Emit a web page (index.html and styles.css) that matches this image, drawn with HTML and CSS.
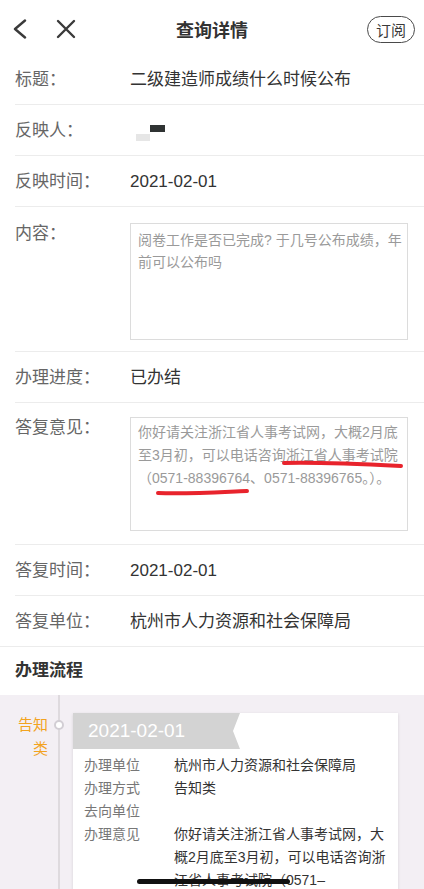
FILE: index.html
```html
<!DOCTYPE html>
<html>
  <head>
    <meta charset="UTF-8" />
    <title>查询详情</title>
    <link rel="stylesheet" href="styles.css">
  </head>
  <body>
    <div class="nav">
      <div class="nav-left">
        <svg class="nav-back" viewBox="0 0 16 20" fill="none" xmlns="http://www.w3.org/2000/svg">
          <path d="M13 1.5L3 10L13 18.5" stroke="currentColor" stroke-width="2.4" stroke-linecap="round" stroke-linejoin="round" />
        </svg>
        <svg class="nav-close" viewBox="0 0 20 20" fill="none" xmlns="http://www.w3.org/2000/svg">
          <path d="M2 2L18 18M18 2L2 18" stroke="currentColor" stroke-width="2.4" stroke-linecap="round" />
        </svg>
      </div>
      <div class="nav-title">查询详情</div>
      <div class="nav-right">
        <span class="subscribe">订阅</span>
      </div>
    </div>

    <div class="detail">
      <div class="field">
        <div class="field-label">标题：</div>
        <div class="field-value">二级建造师成绩什么时候公布</div>
      </div>
      <div class="field">
        <div class="field-label">反映人：</div>
        <div class="field-value name-mask">
          <span class="mask-light"></span><span class="mask-dark"></span>
        </div>
      </div>
      <div class="field">
        <div class="field-label">反映时间：</div>
        <div class="field-value">2021-02-01</div>
      </div>
      <div class="field field-box">
        <div class="field-label">内容：</div>
        <div class="textbox">阅卷工作是否已完成? 于几号公布成绩，年前可以公布吗</div>
      </div>
      <div class="field">
        <div class="field-label">办理进度：</div>
        <div class="field-value">已办结</div>
      </div>
      <div class="field field-box reply">
        <div class="field-label">答复意见：</div>
        <div class="textbox textbox-reply">
          你好请关注浙江省人事考试网，大概2月底至3月初，可以电话咨询浙江省人事考试院（0571-88396764、0571-88396765。）。
          <svg class="marks" viewBox="0 0 278 114" fill="none" xmlns="http://www.w3.org/2000/svg">
            <path d="M153 45C190 44 230 46 270 48" stroke="#e8232c" stroke-width="4" stroke-linecap="round" />
            <path d="M27 75C60 76 90 74 116 73" stroke="#e8232c" stroke-width="4" stroke-linecap="round" />
          </svg>
        </div>
      </div>
      <div class="field">
        <div class="field-label">答复时间：</div>
        <div class="field-value">2021-02-01</div>
      </div>
      <div class="field field-last">
        <div class="field-label">答复单位：</div>
        <div class="field-value">杭州市人力资源和社会保障局</div>
      </div>
    </div>

    <div class="flow-title">办理流程</div>

    <div class="timeline">
      <div class="tl-side">
        <div class="tl-type">告知类</div>
        <span class="tl-dot"></span>
      </div>
      <div class="tl-main">
        <div class="tl-card">
          <div class="tl-date">2021-02-01</div>
          <div class="tl-rows">
            <div class="tl-row">
              <div class="tl-label">办理单位</div>
              <div class="tl-value">杭州市人力资源和社会保障局</div>
            </div>
            <div class="tl-row">
              <div class="tl-label">办理方式</div>
              <div class="tl-value">告知类</div>
            </div>
            <div class="tl-row">
              <div class="tl-label">去向单位</div>
              <div class="tl-value"></div>
            </div>
            <div class="tl-row">
              <div class="tl-label">办理意见</div>
              <div class="tl-value">你好请关注浙江省人事考试网，大概2月底至3月初，可以电话咨询浙江省人事考试院（0571–88396764、0571–88396765。）。</div>
            </div>
          </div>
        </div>
      </div>
    </div>

    <div class="home-bar"></div>
  </body>
</html>
```

FILE: styles.css
```css
:root {
  --text-primary: #333333;
  --text-label: #666666;
  --text-muted: #9a9a9a;
  --border-color: #ececec;
  --box-border: #dcdcdc;
  --flow-bg: #f3eff4;
  --accent: #f2a31f;
}

* {
  margin: 0;
  padding: 0;
  box-sizing: border-box;
}

html,
body {
  height: 100%;
  overflow: hidden;
}

body {
  font-family: "Liberation Sans", "Noto Sans CJK SC", sans-serif;
  background-color: #ffffff;
  color: var(--text-primary);
  display: flex;
  flex-direction: column;
}

/* Top navigation */
.nav {
  height: 54px;
  padding-top: 4px;
  display: grid;
  grid-template-columns: 1fr auto 1fr;
  align-items: center;
  flex-shrink: 0;
}

.nav-left {
  display: flex;
  align-items: center;
  gap: 28px;
  padding-left: 12px;
  color: #3a3a3a;
}

.nav-back {
  width: 16px;
  height: 20px;
}

.nav-close {
  width: 20px;
  height: 20px;
}

.nav-title {
  font-size: 18px;
  font-weight: 700;
  color: var(--text-primary);
}

.nav-right {
  display: flex;
  justify-content: flex-end;
  padding-right: 9px;
}

.subscribe {
  display: inline-flex;
  align-items: center;
  height: 27px;
  padding: 0 8px;
  border: 1.5px solid #4a4a4a;
  border-radius: 14px;
  font-size: 15px;
  color: #3a3a3a;
}

/* Detail fields */
.detail {
  flex-shrink: 0;
}

.field {
  display: flex;
  margin-left: 15px;
  padding: 15px 0 13px;
  border-bottom: 1px solid var(--border-color);
  font-size: 17px;
  line-height: 22px;
}

.field-label {
  width: 115px;
  flex-shrink: 0;
  color: var(--text-label);
}

.field-value {
  color: var(--text-primary);
}

.field-box {
  padding: 16px 0 11px;
}

.field-box.reply {
  padding: 14px 0 13px;
}

.field-last {
  border-bottom: none;
}

.name-mask {
  display: flex;
  align-items: flex-start;
  padding: 2px 0 0 6px;
}

.mask-light {
  width: 14px;
  height: 7px;
  margin-top: 12px;
  background-color: #e6e6e6;
}

.mask-dark {
  width: 15px;
  height: 7px;
  margin-top: 3px;
  background-color: #2f3333;
}

.textbox {
  position: relative;
  width: 278px;
  height: 117px;
  padding: 5px 3px 5px 7px;
  border: 1px solid var(--box-border);
  font-size: 14px;
  line-height: 22px;
  color: var(--text-muted);
}

.textbox-reply {
  height: 114px;
  padding: 3px 7px;
  line-height: 23px;
}

.marks {
  position: absolute;
  left: 0;
  top: 0;
  width: 278px;
  height: 114px;
}

/* Flow */
.flow-title {
  flex-shrink: 0;
  padding: 13px 15px;
  border-top: 1px solid var(--border-color);
  font-size: 17px;
  font-weight: 700;
  line-height: 22px;
}

.timeline {
  flex: 1;
  display: flex;
  background-color: var(--flow-bg);
}

.tl-side {
  position: relative;
  width: 60px;
  flex-shrink: 0;
  padding: 18px 10px 0 18px;
  border-right: 2px solid #dedade;
}

.tl-type {
  font-size: 15px;
  line-height: 24px;
  text-align: right;
  color: var(--accent);
}

.tl-dot {
  position: absolute;
  right: -6px;
  top: 25px;
  width: 10px;
  height: 10px;
  border: 2px solid #d2ced4;
  border-radius: 50%;
  background-color: #ffffff;
}

.tl-main {
  flex: 1;
  padding: 18px 26px 0 13px;
}

.tl-card {
  height: 100%;
  background-color: #ffffff;
  box-shadow: 0 1px 3px rgba(0, 0, 0, 0.12);
}

.tl-date {
  width: 167px;
  height: 36px;
  padding-left: 15px;
  background-color: #d3d3d3;
  clip-path: polygon(0 0, 100% 0, calc(100% - 7px) 50%, 100% 100%, 0 100%);
  color: #ffffff;
  font-size: 19px;
  line-height: 36px;
}

.tl-rows {
  padding: 5px 8px 0 11px;
}

.tl-row {
  display: flex;
  font-size: 14px;
  line-height: 23px;
}

.tl-label {
  width: 90px;
  flex-shrink: 0;
  color: #777777;
}

.tl-value {
  flex: 1;
  min-height: 23px;
  color: var(--text-primary);
}

.home-bar {
  position: fixed;
  left: 137px;
  bottom: 5px;
  width: 153px;
  height: 5px;
  border-radius: 3px;
  background-color: #111111;
}
```
